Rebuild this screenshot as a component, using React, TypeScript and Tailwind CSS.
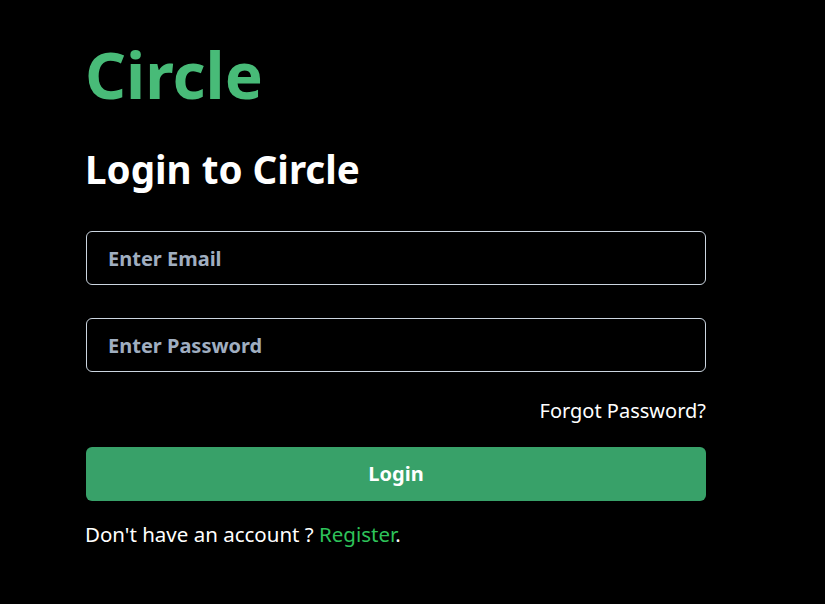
export default function App() {
  return (
    <div
      className="min-h-screen w-full bg-black text-white"
      style={{ fontFamily: '"Noto Sans", "Open Sans", sans-serif' }}
    >
      <div className="flex w-[620px] flex-col pl-0 ml-[86px] pt-[37px]">
        <h1 className="-ml-[1px] text-[64px] font-bold leading-[1.2] text-[#48bb78]">Circle</h1>
        <h2 className="-ml-[1px] mt-[32px] text-[38.6px] font-bold leading-[1.2]">Login to Circle</h2>

        <div className="mt-[39px] flex flex-col">
          <input
            type="email"
            placeholder="Enter Email"
            className="h-[54px] w-full rounded-md border border-[#cbd5e0] bg-transparent px-[21px] text-[20px] font-bold text-white outline-none placeholder:text-[#a0aec0]"
          />
          <input
            type="password"
            placeholder="Enter Password"
            className="mt-[33px] h-[54px] w-full rounded-md border border-[#cbd5e0] bg-transparent px-[21px] text-[20px] font-bold text-white outline-none placeholder:text-[#a0aec0]"
          />
        </div>

        <div className="mt-[24px] flex justify-end">
          <span className="text-[20px] leading-[30px]">Forgot Password?</span>
        </div>

        <button className="mt-[21px] h-[54px] w-full rounded-md bg-[#38a169] text-[20px] font-bold text-white">
          Login
        </button>

        <p className="-ml-[1px] mt-[18px] text-[20.5px] leading-[30px]">
          Don't have an account ? <span className="text-[#2ec35a]">Register</span>.
        </p>
      </div>
    </div>
  );
}
